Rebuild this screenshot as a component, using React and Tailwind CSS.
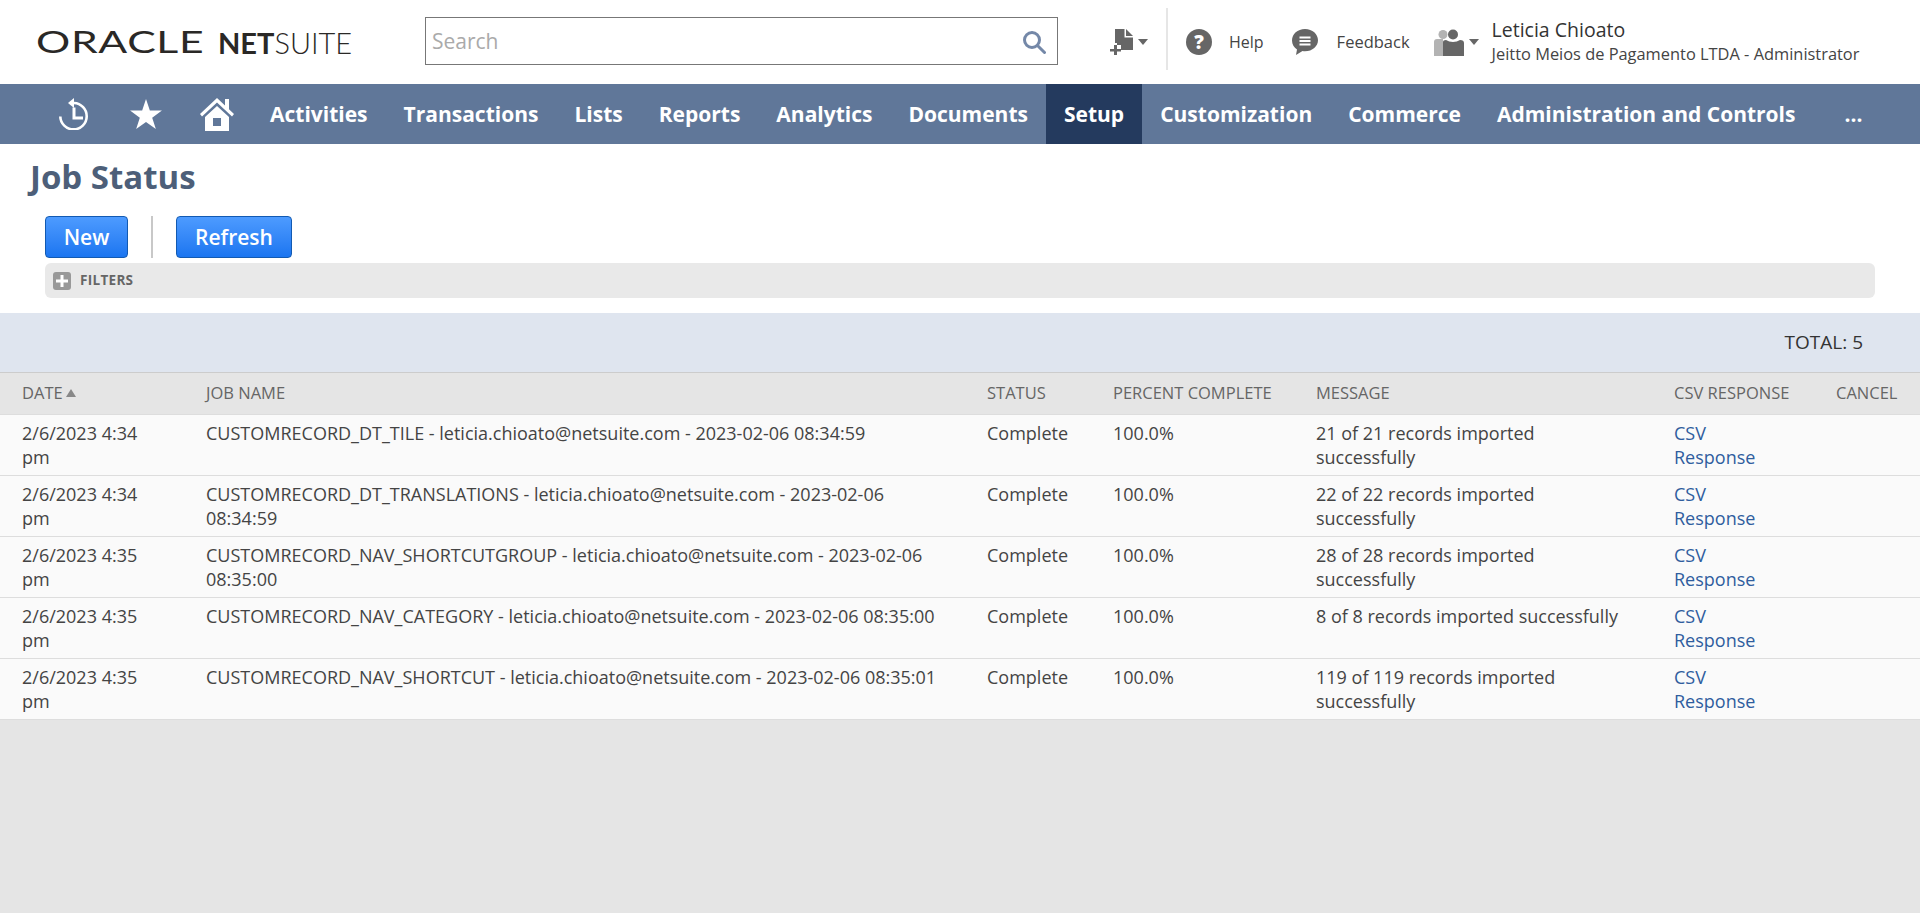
import React from 'react'

const navItems = [
  { label: 'Activities' },
  { label: 'Transactions' },
  { label: 'Lists' },
  { label: 'Reports' },
  { label: 'Analytics' },
  { label: 'Documents' },
  { label: 'Setup', active: true },
  { label: 'Customization' },
  { label: 'Commerce' },
  { label: 'Administration and Controls' },
  { label: '...', more: true },
]

const jobs = [
  {
    date: '2/6/2023 4:34 pm',
    name: 'CUSTOMRECORD_DT_TILE - leticia.chioato@netsuite.com - 2023-02-06 08:34:59',
    message: '21 of 21 records imported successfully',
  },
  {
    date: '2/6/2023 4:34 pm',
    name: 'CUSTOMRECORD_DT_TRANSLATIONS - leticia.chioato@netsuite.com - 2023-02-06 08:34:59',
    message: '22 of 22 records imported successfully',
  },
  {
    date: '2/6/2023 4:35 pm',
    name: 'CUSTOMRECORD_NAV_SHORTCUTGROUP - leticia.chioato@netsuite.com - 2023-02-06 08:35:00',
    message: '28 of 28 records imported successfully',
  },
  {
    date: '2/6/2023 4:35 pm',
    name: 'CUSTOMRECORD_NAV_CATEGORY - leticia.chioato@netsuite.com - 2023-02-06 08:35:00',
    message: '8 of 8 records imported successfully',
  },
  {
    date: '2/6/2023 4:35 pm',
    name: 'CUSTOMRECORD_NAV_SHORTCUT - leticia.chioato@netsuite.com - 2023-02-06 08:35:01',
    message: '119 of 119 records imported successfully',
  },
]

function Caret() {
  return <span className="ml-[5px] h-0 w-0 border-x-[5px] border-t-[6px] border-x-transparent border-t-[#666]" />
}

function Header() {
  return (
    <header className="flex h-[84px] items-center bg-white">
      <div className="ml-[36px] flex w-[389px] items-center whitespace-nowrap pt-[1px] text-[#2a2826] [font-family:Lato,sans-serif]">
        <span className="w-[182px]">
          <span className="inline-block origin-left scale-x-[1.4] text-[30.500px] leading-none tracking-[0.5px]">ORACLE</span>
        </span>
        <span className="text-[29px] leading-none">
          <span className="font-bold">NET</span>
          <span className="font-light">SUITE</span>
        </span>
      </div>
      <div className="mb-[2px] flex h-[48px] w-[633px] items-center justify-between border border-[#777] bg-white pl-[6px] pr-[11px] pt-[1px]">
        <span className="text-[21px] text-[#aaa]">Search</span>
        <svg width="24" height="24" viewBox="0 0 24 24" fill="none" stroke="#7488a8" strokeWidth="3">
          <circle cx="10" cy="10" r="7.500" />
          <path d="M15.500 15.500 22.500 22.500" strokeLinecap="round" />
        </svg>
      </div>
      <div className="ml-[52px] flex items-center">
        <svg width="23" height="26" viewBox="0 0 23 26" fill="#666">
          <path d="M5 0h9.500v8.500H23V21H5z" />
          <path d="M16 0l7 7h-7z" />
          <path d="M2 14h5v2h4v5H7v5H2v-5H0v-5h2z" fill="#fff" />
          <path d="M4 16h3v4h4v2.500H7V26H4v-3.500H0V20h4z" />
        </svg>
        <Caret />
      </div>
      <div className="mb-[6px] ml-[18px] h-[62px] w-[2px] bg-[#e6e6e6]" />
      <svg className="ml-[18px]" width="26" height="26" viewBox="0 0 26 26">
        <circle cx="13" cy="13" r="13" fill="#666" />
        <text x="13" y="20" textAnchor="middle" fontSize="19" fontWeight="800" fill="#fff" fontFamily="Open Sans">?</text>
      </svg>
      <span className="ml-[17px] text-[16px] text-[#444]">Help</span>
      <svg className="ml-[27px]" width="28" height="28" viewBox="0 0 28 28">
        <path d="M14 1C6.500 1 1 6 1 12.500c0 4 2 7 5 9l-1 5.500 6.500-4c1 .2 1.500.2 2.500.2 7.500 0 13-5 13-11S21.500 1 14 1z" fill="#666" />
        <path d="M8.500 8.500h11v2h-11zM8.500 12h11v2h-11zM8.500 15.500h11v2h-11z" fill="#fff" />
      </svg>
      <span className="ml-[18px] text-[16.500px] text-[#444]">Feedback</span>
      <div className="ml-[24px] flex items-center">
        <svg width="30" height="27" viewBox="0 0 30 27">
          <circle cx="9" cy="5.500" r="4.500" fill="#b3b3b3" />
          <path d="M0 13q0-3 3-3h6v17H0z" fill="#b3b3b3" />
          <circle cx="19" cy="5.500" r="5" fill="#666" />
          <path d="M9 13q0-2 3-2 3 2 7 2t7-2q4 0 4 3v13H9z" fill="#666" />
        </svg>
        <Caret />
      </div>
      <div className="mb-[2px] ml-[13px] flex flex-col">
        <span className="text-[19.500px] leading-[25px] text-[#333]">Leticia Chioato</span>
        <span className="text-[16.400px] leading-[24px] text-[#444]">Jeitto Meios de Pagamento LTDA - Administrator</span>
      </div>
    </header>
  )
}

function NavBar() {
  return (
    <nav className="flex h-[60px] items-stretch bg-[#607799] pl-[38px] text-white">
      <div className="flex items-center">
        <svg className="ml-[21px]" width="30" height="32" viewBox="0 0 30 32" fill="none" stroke="#fff" strokeWidth="2.600">
          <path d="M14 5h1a13.200 13.200 0 1 1-13.700 13.500" />
          <path d="M15 0 9 5l6 5z" fill="#fff" stroke="none" />
          <path d="M15 9.500v10.500h9" strokeWidth="3" />
        </svg>
        <svg className="ml-[41px]" width="32" height="30" viewBox="0 0 34 32" fill="#fff">
          <path d="M17 0l4.100 12.200H34l-10.400 7.700 3.900 12.100L17 24.500 6.500 32l3.900-12.100L0 12.200h12.900z" />
        </svg>
        <svg className="ml-[38px]" width="34" height="33" viewBox="0 0 34 33" fill="#fff">
          <path d="M17 0 0 16l2 2.500L17 4.500l15 14 2-2.500-5-4.700V1h-4v6.500z" />
          <path d="M17 8 5 19v14h24V19zM13 20h8v8h-8z" fillRule="evenodd" />
        </svg>
      </div>
      <ul className="ml-[18px] flex items-stretch">
        {navItems.map(item => (
          <li
            key={item.label}
            className={`flex items-center px-[18px] pt-[1px] text-[21px] font-bold ${item.active ? 'bg-[#243a5e]' : ''} ${item.more ? 'ml-[13px]' : ''}`}
          >
            {item.label}
          </li>
        ))}
      </ul>
    </nav>
  )
}

function JobTable() {
  const th = 'px-0 text-left align-middle text-[16.500px] font-normal uppercase text-[#666]'
  const td = 'pt-[6px] pb-[5px] align-top text-[18px] leading-[24.500px]'
  return (
    <table className="w-full table-fixed border-collapse">
      <colgroup>
        <col className="w-[206px]" />
        <col className="w-[781px]" />
        <col className="w-[126px]" />
        <col className="w-[203px]" />
        <col className="w-[358px]" />
        <col className="w-[162px]" />
        <col />
      </colgroup>
      <thead>
        <tr className="h-[41px] border-b border-[#ddd] bg-[#e5e5e5]">
          <th className={`${th} pl-[22px]`}>
            Date
            <span className="relative top-[-2px] ml-[3px] inline-block h-0 w-0 border-x-[5px] border-b-[8px] border-x-transparent border-b-[#888]" />
          </th>
          <th className={th}>Job Name</th>
          <th className={th}>Status</th>
          <th className={th}>Percent Complete</th>
          <th className={th}>Message</th>
          <th className={th}>CSV Response</th>
          <th className={th}>Cancel</th>
        </tr>
      </thead>
      <tbody className="text-[#444]">
        {jobs.map(job => (
          <tr key={job.name} className="h-[61px] border-b border-[#ddd] bg-[#fafafa]">
            <td className={`${td} pl-[22px] pr-[40px]`}>{job.date}</td>
            <td className={`${td} pr-[37px]`}>{job.name}</td>
            <td className={td}>Complete</td>
            <td className={td}>100.0%</td>
            <td className={`${td} pr-[44px]`}>{job.message}</td>
            <td className={`${td} pr-[60px] text-[#2f5d9e]`}>CSV Response</td>
            <td className={td} />
          </tr>
        ))}
      </tbody>
    </table>
  )
}

export default function App() {
  return (
    <div className="flex min-h-[913px] flex-col bg-[#e5e5e5] [font-family:'Open_Sans',sans-serif]">
      <Header />
      <NavBar />
      <div className="bg-white">
        <h1 className="ml-[30px] flex h-[72px] items-center pb-[6px] text-[33px] font-bold text-[#4d5f79]">Job Status</h1>
        <div className="mx-[45px] flex items-stretch">
          <button className="h-[42px] w-[83px] rounded-[4px] border border-[#125ab2] bg-linear-to-b from-[#4d9bff] to-[#1a75f0] pt-[1px] text-[21px] font-semibold text-white">
            New
          </button>
          <span className="mx-[23px] w-[2px] bg-[#c8c8c8]" />
          <button className="h-[42px] w-[116px] rounded-[4px] border border-[#125ab2] bg-linear-to-b from-[#4d9bff] to-[#1a75f0] pt-[1px] text-[21px] font-semibold text-white">
            Refresh
          </button>
        </div>
        <div className="mx-[45px] mt-[5px] flex h-[35px] items-center rounded-[6px] bg-[#e9e9e9] pl-[8px]">
          <span className="flex h-[18px] w-[18px] items-center justify-center rounded-[3px] bg-[#999]">
            <svg width="12" height="12" viewBox="0 0 12 12" fill="#fff">
              <path d="M4.500 0h3v4.500H12v3H7.500V12h-3V7.500H0v-3h4.500z" />
            </svg>
          </span>
          <span className="ml-[9px] text-[13.500px] font-bold uppercase tracking-[0.3px] text-[#666]">Filters</span>
        </div>
        <div className="h-[15px]" />
      </div>
      <div className="flex h-[60px] items-center justify-end border-b border-[#ccc] bg-[#dfe5ef] pr-[57px] text-[19px] text-[#333]">
        TOTAL: 5
      </div>
      <JobTable />
    </div>
  )
}
